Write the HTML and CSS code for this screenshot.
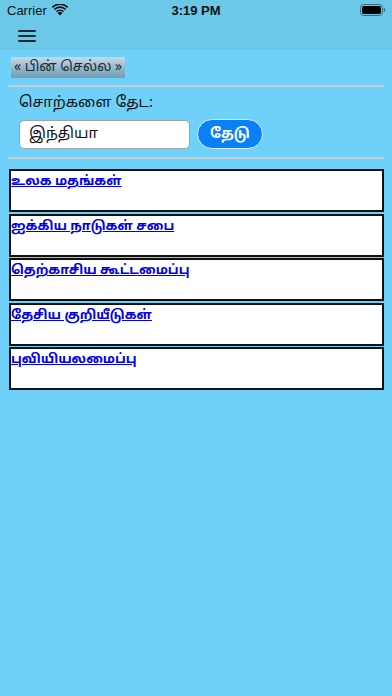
FILE: index.html
```html
<!DOCTYPE html>
<html lang="ta">
<head>
<meta charset="utf-8">
<link rel="stylesheet" href="styles.css">
</head>
<body>
<div class="screen">
  <div class="statusbar">
    <div class="sb-left">
      <span class="carrier">Carrier</span>
      <svg class="wifi" width="16" height="12" viewBox="0 0 16 12">
        <path d="M8 11.5 L5.6 8.9 A3.4 3.4 0 0 1 10.4 8.9 Z" fill="#111"/>
        <path d="M3.9 7.1 A5.9 5.9 0 0 1 12.1 7.1 L11 8.2 A4.4 4.4 0 0 0 5 8.2 Z" fill="#111"/>
        <path d="M1.7 4.9 A9 9 0 0 1 14.3 4.9 L13.2 6 A7.5 7.5 0 0 0 2.8 6 Z" fill="#111"/>
        <path d="M-0.3 2.8 A12 12 0 0 1 16.3 2.8 L15.2 3.9 A10.5 10.5 0 0 0 0.8 3.9 Z" fill="#111"/>
      </svg>
    </div>
    <div class="sb-time">3:19 PM</div>
    <div class="sb-right">
      <svg width="26" height="12" viewBox="0 0 26 12">
        <rect x="0.5" y="0.5" width="22" height="11" rx="3" fill="none" stroke="#3a6a80" stroke-width="1"/>
        <rect x="2" y="2" width="19" height="8" rx="1.8" fill="#000"/>
        <path d="M23.8 4 Q25.3 4 25.3 6 Q25.3 8 23.8 8 Z" fill="#3a6a80"/>
      </svg>
    </div>
  </div>
  <div class="navbar">
    <button class="menu" aria-label="menu">
      <span></span><span></span><span></span>
    </button>
  </div>
  <div class="content">
    <a class="back">« பின் செல்ல »</a>
    <hr class="rule">
    <div class="search">
      <label class="search-label">சொற்களை தேட:</label>
      <div class="search-row">
        <div class="search-input">இந்தியா</div>
        <button class="search-btn">தேடு</button>
      </div>
    </div>
    <hr class="rule rule2">
    <ul class="results">
      <li><a href="#">உலக மதங்கள்</a></li>
      <li><a href="#">ஐக்கிய நாடுகள் சபை</a></li>
      <li><a href="#">தெற்காசிய கூட்டமைப்பு</a></li>
      <li><a href="#">தேசிய குறியீடுகள்</a></li>
      <li><a href="#">புவியியலமைப்பு</a></li>
    </ul>
  </div>
</div>
</body>
</html>
```

FILE: styles.css
```css
* { box-sizing: border-box; }
html, body { margin: 0; padding: 0; }
body {
  width: 392px;
  height: 696px;
  background: #6fd1fa;
  font-family: "Noto Sans Tamil", "Lohit Tamil", "Noto Sans", "DejaVu Sans", sans-serif;
  overflow: hidden;
}
.screen { width: 392px; height: 696px; background: #6fd1fa; }
.statusbar {
  height: 20px;
  background: #6cc8e7;
  display: flex;
  align-items: center;
  justify-content: space-between;
  padding: 0 6px 0 7px;
  position: relative;
  font-family: "Liberation Sans", Arial, sans-serif;
  color: #111;
}
.sb-left { display: flex; align-items: center; gap: 5px; font-size: 13px; }
.wifi { margin-top: -1px; }
.sb-time {
  position: absolute;
  left: 0; right: 0;
  text-align: center;
  font-weight: bold;
  font-size: 13px;
  pointer-events: none;
}
.sb-right { display: flex; align-items: center; }
.navbar {
  height: 30px;
  background: #6cc8e7;
  display: flex;
  align-items: center;
  padding-left: 18px;
}
.menu {
  border: 0; background: none; padding: 0; margin-top: 2px;
  width: 18px; height: 12px;
  display: flex; flex-direction: column; justify-content: space-between;
}
.menu span { display: block; height: 2px; background: #1d2a30; border-radius: 1px; }
.content { padding: 7px 8px 0 8px; }
.back {
  display: inline-block;
  margin-left: 3px;
  height: 21px;
  padding: 0 3px;
  line-height: 21px;
  font-size: 14px;
  color: #1b2c36;
  background: linear-gradient(#c6dae5, #8fb3c6 60%, #739db3);
}
.rule {
  border: 0;
  height: 2px;
  background: #c9cfd2;
  margin: 7px 0 0 0;
}
.search { padding: 7px 0 0 11px; }
.search-label { display: block; font-size: 15px; color: #111; line-height: 20px; }
.search-row { display: flex; align-items: center; gap: 7px; margin-top: 5px; }
.search-input {
  width: 171px; height: 29px;
  background: #fff;
  border: 1px solid #9aa6ad;
  border-radius: 5px;
  font-size: 15px;
  line-height: 27px;
  padding-left: 9px;
  color: #111;
}
.search-btn {
  width: 66px; height: 30px;
  border-radius: 15px;
  background: #0a80f6;
  border: 1px solid #d8eefc;
  color: #fff;
  font-family: inherit;
  font-size: 14px;
  font-weight: bold;
  padding: 0;
}
.rule2 { margin-top: 8px; }
.results {
  list-style: none;
  margin: 10px 0 0 1px;
  padding: 0;
  display: flex;
  flex-direction: column;
  gap: 1.5px;
}
.results li {
  height: 43px;
  background: #fff;
  border: 2px solid #111;
  padding: 0;
}
.results a {
  color: #0000ee;
  font-weight: bold;
  font-size: 13px;
  text-decoration: underline;
  line-height: 18px;
}
```
